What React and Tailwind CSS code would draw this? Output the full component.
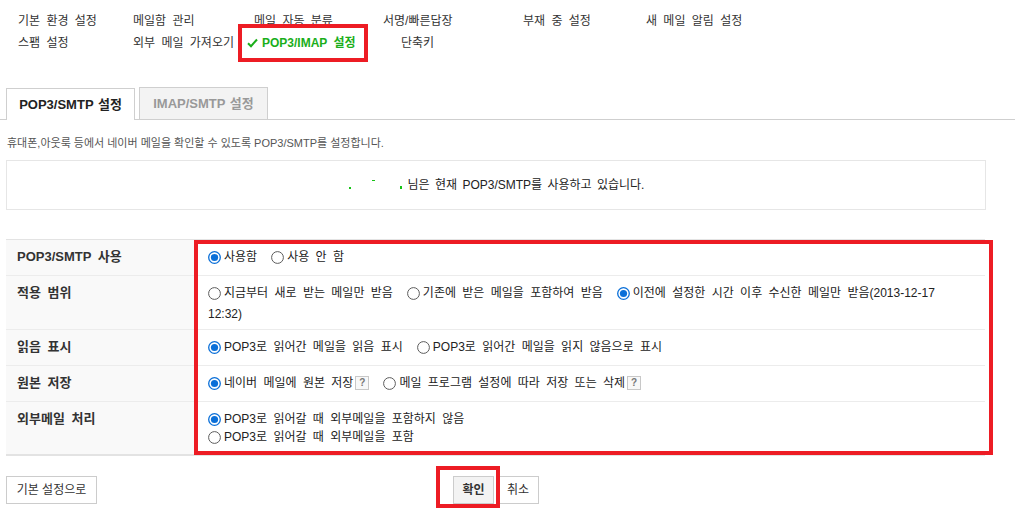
import React from "react";

const Radio = ({ checked }) =>
  checked ? (
    <svg width="13" height="13" viewBox="0 0 13 13" className="shrink-0">
      <circle cx="6.5" cy="6.5" r="5.8" fill="#fff" stroke="#0a6fd8" strokeWidth="1.3" />
      <circle cx="6.5" cy="6.5" r="3.6" fill="#0a6fd8" />
    </svg>
  ) : (
    <svg width="13" height="13" viewBox="0 0 13 13" className="shrink-0">
      <circle cx="6.5" cy="6.5" r="5.9" fill="#fff" stroke="#5c5c5c" strokeWidth="1" />
    </svg>
  );

const Option = ({ checked, children, last }) => (
  <label className={`inline-flex items-center whitespace-nowrap ${last ? "" : "mr-[14px]"}`}>
    <Radio checked={checked} />
    <span className="ml-[3px]">{children}</span>
  </label>
);

const Help = () => (
  <span className="ml-[2px] inline-flex h-[14px] w-[14px] items-center justify-center border border-[#c8c8c8] bg-[#f8f8f8] text-[10px] font-bold leading-none text-[#777]">
    ?
  </span>
);

const Row = ({ label, tall, last, children }) => (
  <div className={`flex ${last ? "border-b-2 border-[#e3e3e3]" : "border-b border-[#ececec]"} ${tall ? "h-[54px]" : "h-[36px]"}`}>
    <div className="w-[189px] shrink-0 bg-[#f9f9f9] pl-[11px] pt-[8px] text-[13px] font-bold leading-[18px] text-[#333]">
      {label}
    </div>
    <div className="flex-1 pl-[13px] pt-[8px] text-[12px] leading-[18px] text-[#222]">{children}</div>
  </div>
);

const navTop = [
  ["기본 환경 설정", "w-[115px]"],
  ["메일함 관리", "w-[121px]"],
  ["메일 자동 분류", "w-[129px]"],
  ["서명/빠른답장", "w-[140px]"],
  ["부재 중 설정", "w-[123px]"],
  ["새 메일 알림 설정", ""],
];

export default function App() {
  return (
    <div className="relative h-[508px] w-[1015px] overflow-hidden bg-white font-['Liberation_Sans','Noto_Sans_CJK_KR',sans-serif] text-[#333] [word-spacing:3px]">
      <div className="pl-[18px] pt-[10px] text-[12px] leading-[22px]">
        <div className="flex">
          {navTop.map(([t, w]) => (
            <span key={t} className={`${w} whitespace-nowrap`}>
              {t}
            </span>
          ))}
        </div>
        <div className="flex">
          <span className="w-[115px]">스팸 설정</span>
          <span className="w-[114px]">외부 메일 가져오기</span>
          <span className="flex w-[154px] items-center whitespace-nowrap font-bold text-[#1aae1a]">
            <svg width="11" height="10" viewBox="0 0 11 10" className="mr-[4px]">
              <path d="M1 5.2 L4 8.2 L10 1.5" fill="none" stroke="#1aae1a" strokeWidth="2" />
            </svg>
            POP3/IMAP 설정
          </span>
          <span>단축키</span>
        </div>
      </div>

      <div className="mt-[34px] flex h-[32px] items-end gap-[4px] border-b border-[#cfcfcf] pl-[6px]">
        <div className="-mb-px flex h-[32px] w-[129px] items-center justify-center border border-b-0 border-[#cfcfcf] bg-white text-[13px] font-bold text-[#222] [word-spacing:1px]">
          POP3/SMTP 설정
        </div>
        <div className="flex h-[32px] w-[129px] items-center justify-center border border-b-0 border-[#cfcfcf] bg-[#f3f3f3] text-[13px] font-bold text-[#999] [word-spacing:1px]">
          IMAP/SMTP 설정
        </div>
      </div>

      <p className="mt-[15px] pl-[7px] text-[11px] leading-[16px] text-[#555] [word-spacing:0px]">
        휴대폰,아웃룩 등에서 네이버 메일을 확인할 수 있도록 POP3/SMTP를 설정합니다.
      </p>

      <div className="mx-[6px] mt-[9px] flex h-[50px] w-[980px] items-center justify-center border border-[#e6e6e6] text-[12px] text-[#222] [word-spacing:2px]">
        <span className="relative mr-[4px] inline-block h-[12px] w-[56px]">
          <span className="absolute left-[1px] top-[8px] h-[2px] w-[2px] bg-[#16c416]" />
          <span className="absolute left-[24px] top-[1px] h-[1px] w-[3px] bg-[#16c416]" />
          <span className="absolute left-[52px] top-[7px] h-[3px] w-[2px] bg-[#16c416]" />
        </span>
        님은 현재 POP3/SMTP를 사용하고 있습니다.
      </div>

      <div className="ml-[6px] mt-[29px] w-[979px] border-t border-[#e3e3e3]">
        <Row label="POP3/SMTP 사용">
          <Option checked>사용함</Option>
          <Option last>사용 안 함</Option>
        </Row>
        <Row label="적용 범위" tall>
          <div className="whitespace-nowrap">
            <Option>지금부터 새로 받는 메일만 받음</Option>
            <Option>기존에 받은 메일을 포함하여 받음</Option>
            <Option checked last>
              이전에 설정한 시간 이후 수신한 메일만 받음(2013-12-17
            </Option>
          </div>
          <div>12:32)</div>
        </Row>
        <Row label="읽음 표시">
          <Option checked>POP3로 읽어간 메일을 읽음 표시</Option>
          <Option last>POP3로 읽어간 메일을 읽지 않음으로 표시</Option>
        </Row>
        <Row label="원본 저장">
          <div className="flex items-center">
            <Option checked last>네이버 메일에 원본 저장</Option>
            <Help />
            <span className="w-[14px]" />
            <Option last>메일 프로그램 설정에 따라 저장 또는 삭제</Option>
            <Help />
          </div>
        </Row>
        <Row label="외부메일 처리" tall last>
          <div className="flex flex-col items-start">
            <Option checked last>POP3로 읽어갈 때 외부메일을 포함하지 않음</Option>
            <Option last>POP3로 읽어갈 때 외부메일을 포함</Option>
          </div>
        </Row>
      </div>

      <div className="relative mt-[20px] flex h-[28px] items-center px-[6px] text-[12px]">
        <button className="h-[28px] w-[91px] border border-[#cccccc] bg-white text-[#333]">기본 설정으로</button>
        <div className="absolute left-[453px] top-0 flex gap-[3px]">
          <button className="h-[28px] w-[41px] border border-[#cccccc] bg-[#f3f3f3] font-bold text-[#333]">확인</button>
          <button className="h-[28px] w-[42px] border border-[#cccccc] bg-white text-[#333]">취소</button>
        </div>
      </div>

      <div className="pointer-events-none absolute left-[238px] top-[24px] h-[38px] w-[130px] border-4 border-[#ed1c24]" />
      <div className="pointer-events-none absolute left-[194px] top-[240px] h-[215px] w-[799px] border-4 border-[#ed1c24]" />
      <div className="pointer-events-none absolute left-[436px] top-[466px] h-[42px] w-[64px] border-4 border-[#ed1c24]" />
    </div>
  );
}
